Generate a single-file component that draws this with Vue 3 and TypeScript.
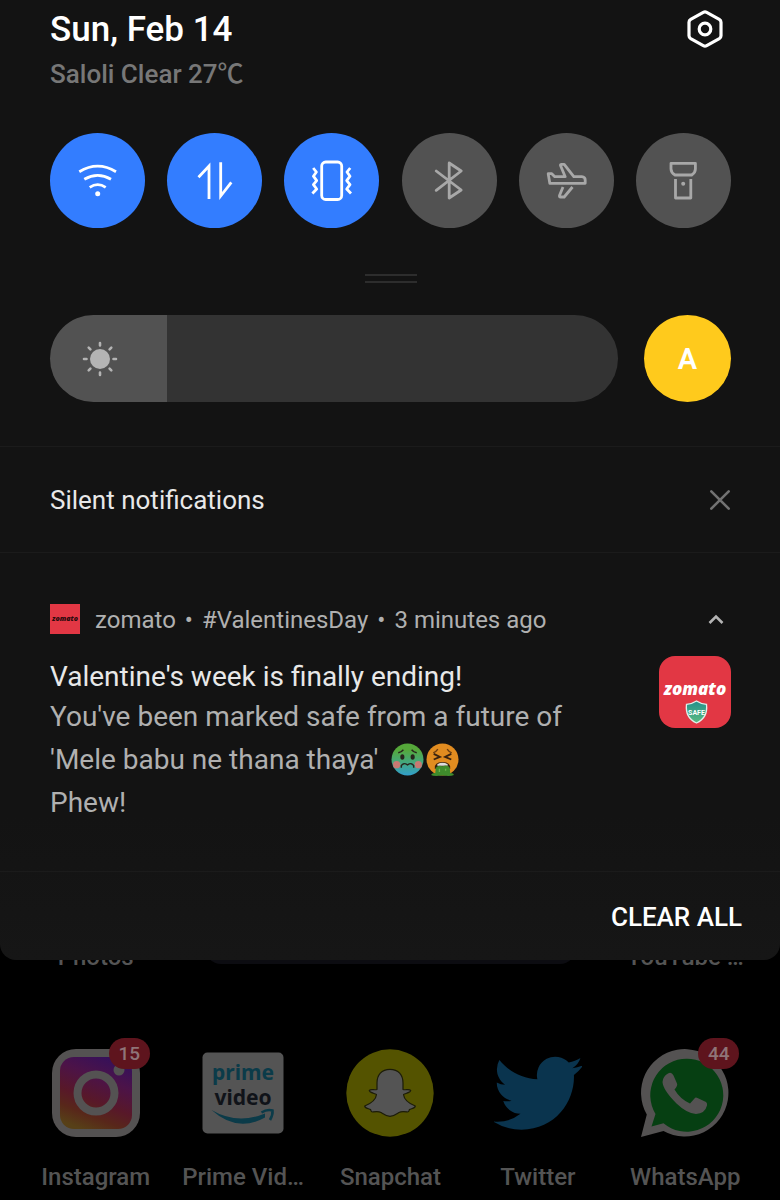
<script setup lang="ts">
import { computed, ref } from 'vue'

interface Toggle {
  id: string
  label: string
  on: boolean
}

const toggles = ref<Toggle[]>([
  { id: 'wifi', label: 'Wi-Fi', on: true },
  { id: 'data', label: 'Mobile data', on: true },
  { id: 'vibrate', label: 'Vibrate', on: true },
  { id: 'bluetooth', label: 'Bluetooth', on: false },
  { id: 'airplane', label: 'Airplane mode', on: false },
  { id: 'torch', label: 'Flashlight', on: false },
])

const brightness = ref(206)
const fill = computed(() => `${brightness.value / 10}%`)

const apps = [
  { id: 'instagram', name: 'Instagram', badge: 15 },
  { id: 'prime', name: 'Prime Vid…', badge: 0 },
  { id: 'snapchat', name: 'Snapchat', badge: 0 },
  { id: 'twitter', name: 'Twitter', badge: 0 },
  { id: 'whatsapp', name: 'WhatsApp', badge: 44 },
]
</script>

<template>
  <div class="screen">
    <main class="shade">
      <section class="controls">
        <header class="top">
          <div>
            <h1>Sun, Feb 14</h1>
            <p class="weather">Saloli Clear 27℃</p>
          </div>
          <button class="plain" type="button" aria-label="Settings">
            <svg width="40" height="40" viewBox="0 0 40 40" fill="none" stroke="#fff" stroke-width="3.2" stroke-linejoin="round">
              <path d="M18.3 3.4Q20 2.5 21.700 3.400L34.300 10.400Q36 11.400 36 13.300V26.700Q36 28.600 34.300 29.600L21.700 36.600Q20 37.500 18.300 36.600L5.700 29.600Q4 28.600 4 26.700V13.300Q4 11.400 5.700 10.400Z" />
              <circle cx="20" cy="20" r="5.8" />
            </svg>
          </button>
        </header>

        <div class="toggles">
          <button
            v-for="t in toggles"
            :key="t.id"
            type="button"
            class="toggle"
            :class="{ on: t.on }"
            :aria-label="t.label"
            :aria-pressed="t.on"
            @click="t.on = !t.on"
          >
            <svg viewBox="0 0 95 95" fill="none" stroke="currentColor" stroke-width="2.800">
              <g v-if="t.id === 'wifi'">
                <path d="M29.300 38.700Q47.700 27.500 66 38.700M34.300 46.300Q47.700 38.500 61 46.300M39.700 54.300Q47.700 49 55.700 54.300" />
                <circle cx="47.700" cy="60.700" r="2.500" fill="currentColor" stroke="none" />
              </g>
              <path v-else-if="t.id === 'data'" d="M31.500 44.200L42 33V66M53.700 29.300V63L64.300 49.300" />
              <g v-else-if="t.id === 'vibrate'">
                <rect x="37.700" y="29" width="20" height="37.500" rx="4" />
                <path stroke-linejoin="round" d="M29.200 35L32.400 39L29.400 43.200L32.700 47.700L29.400 51.700L32.700 56L28.400 60.500M66.200 35L63 39L66 43.200L62.700 47.700L66 51.700L62.700 56L67 60.500" />
              </g>
              <path v-else-if="t.id === 'bluetooth'" stroke-linejoin="round" stroke-linecap="round" d="M34.200 38L59.200 57L47.200 65V30L59.200 38L34.200 57.300" />
              <g v-else-if="t.id === 'airplane'" stroke-linejoin="round">
                <path d="M29.200 40.700H32.800L35.800 43.700H46.200L41.500 32.500Q41.200 31.300 42.500 31.300H45.200L54.800 43.700H62.800Q66.200 44 66.200 47V50.300H30.800Z" />
                <path d="M44 54L40.500 62.500Q40.200 64 41.500 64H45.200L53.500 54" />
              </g>
              <g v-else stroke-linejoin="round">
                <path d="M35 30.300H59.400V36Q59.400 39.500 55.700 42H39Q35 39.500 35 36Z" />
                <path d="M39.500 46V65H54.800V46" />
                <circle cx="47.200" cy="50.700" r="2" fill="currentColor" stroke="none" />
              </g>
            </svg>
          </button>
        </div>

        <div class="handle"></div>

        <div class="brightness">
          <label class="slider">
            <input v-model.number="brightness" type="range" min="0" max="1000" aria-label="Brightness" :style="{ '--fill': fill }" />
            <svg class="sun" width="36" height="36" viewBox="0 0 36 36" stroke="#b4b4b4" stroke-width="2.600" stroke-linecap="round">
              <circle cx="18" cy="18" r="10" fill="#b4b4b4" stroke="none" />
              <path d="M18 2V4.500M18 31.500V34M2 18H4.500M31.500 18H34M6.700 6.700L8.400 8.400M27.600 27.600L29.300 29.300M29.300 6.700L27.600 8.400M8.400 27.600L6.700 29.300" />
            </svg>
          </label>
          <button class="auto" type="button" aria-label="Automatic brightness">A</button>
        </div>
      </section>

      <section class="silent">
        <h2>Silent notifications</h2>
        <button class="plain" type="button" aria-label="Dismiss silent notifications">
          <svg width="22" height="22" viewBox="0 0 22 22" fill="none" stroke="#727272" stroke-width="2.600" stroke-linecap="round">
            <path d="M2.300 2.300L19.700 19.700M19.700 2.300L2.300 19.700" />
          </svg>
        </button>
      </section>

      <article class="note">
        <header class="meta">
          <span class="mark">zomato</span>
          <p class="source"><span>zomato</span><span>•</span><span>#ValentinesDay</span><span>•</span><span>3 minutes ago</span></p>
          <button class="plain" type="button" aria-label="Collapse">
            <svg width="16" height="12" viewBox="0 0 16 12" fill="none" stroke="#b4b4b4" stroke-width="2.600">
              <path d="M1.500 10L8 3.500L14.500 10" />
            </svg>
          </button>
        </header>
        <div class="content">
          <div class="words">
            <h3>Valentine's week is finally ending!</h3>
            <p class="message">
              You've been marked safe from a future of<br />
              'Mele babu ne thana thaya'
              <svg class="emoji" viewBox="0 0 32 32" role="img" aria-label="Nauseated face">
                <defs>
                  <linearGradient id="sick" x1="0" y1="0" x2="0" y2="1">
                    <stop offset="0.200" stop-color="#55a83a" />
                    <stop offset="0.600" stop-color="#43a880" />
                    <stop offset="1" stop-color="#319fcb" />
                  </linearGradient>
                </defs>
                <circle cx="16" cy="16" r="15.500" fill="url(#sick)" />
                <circle cx="5.500" cy="21" r="3.500" fill="#c77972" />
                <circle cx="26.500" cy="21" r="3.500" fill="#c77972" />
                <ellipse cx="11" cy="13.500" rx="2" ry="2.700" fill="#28251c" />
                <ellipse cx="21" cy="13.500" rx="2" ry="2.700" fill="#28251c" />
                <path d="M7 9.500Q10 9 12 6.500M25 9.500Q22 9 20 6.500M10 24V22Q12 18.500 16 21.200Q20 18.500 22 22V24" fill="none" stroke="#28251c" stroke-width="1.400" />
              </svg>
              <svg class="emoji" viewBox="0 0 32 32" role="img" aria-label="Vomiting face">
                <circle cx="16" cy="16" r="15.500" fill="#e18c20" />
                <path d="M7 9.500Q10 8.500 11.500 6M25 9.500Q22 8.500 20.500 6" fill="none" stroke="#6b3e12" stroke-width="1.300" />
                <path d="M7.500 10.500L13.500 13.500L7.500 16M24.500 10.500L18.500 13.500L24.500 16" fill="none" stroke="#39220f" stroke-width="1.800" />
                <path d="M8.500 25Q8 18.500 16 18.500T23.500 25Z" fill="#39220f" />
                <path d="M11 20.500Q16 18 21 20.500V22H11Z" fill="#ddd" />
                <path d="M9.500 24Q12 21 16 22.500Q21 20.500 23 24L23.500 29Q27 29 27 31Q24 32.500 16 31.500Q7 32.500 5 31Q5.500 29 9 29Z" fill="#3f8c2c" />
                <path d="M13 25V28M19 25V27" stroke="#6bb24d" stroke-width="1.300" />
              </svg><br />
              Phew!
            </p>
          </div>
          <svg class="brand" viewBox="0 0 72 72" role="img" aria-label="Zomato">
            <defs>
              <linearGradient id="shield" x1="0" y1="0" x2="0" y2="1">
                <stop offset="0" stop-color="#23908c" />
                <stop offset="1" stop-color="#5dbb82" />
              </linearGradient>
            </defs>
            <rect width="72" height="72" rx="16" fill="#e23744" />
            <text x="36" y="39" text-anchor="middle" class="brand-name">zomato</text>
            <path d="M37.500 45Q42 48 47.500 48.300C48.500 57 45.500 63.500 37.500 67C29.500 63.500 26.500 57 27.500 48.300Q33 48 37.500 45Z" fill="url(#shield)" stroke="#dff0ea" stroke-width="1.300" />
            <text x="37.500" y="59" text-anchor="middle" class="safe">SAFE</text>
          </svg>
        </div>
      </article>

      <footer class="actions">
        <button class="clear" type="button">CLEAR ALL</button>
      </footer>
    </main>

    <section class="home">
      <div class="previous">
        <span class="name">Photos</span>
        <span class="search"></span>
        <span class="name">YouTube …</span>
      </div>
      <nav class="apps">
        <a v-for="app in apps" :key="app.id" class="app" href="#">
          <span class="tile">
            <svg v-if="app.id === 'instagram'" viewBox="0 0 88 88">
              <defs>
                <linearGradient id="insta" x1="0.700" y1="0" x2="0.300" y2="1">
                  <stop offset="0" stop-color="#35105b" />
                  <stop offset="0.300" stop-color="#4c1348" />
                  <stop offset="0.600" stop-color="#581829" />
                  <stop offset="0.800" stop-color="#58271a" />
                  <stop offset="1" stop-color="#574017" />
                </linearGradient>
              </defs>
              <rect width="88" height="88" rx="24" fill="#545252" />
              <rect x="8" y="8" width="72" height="72" rx="14" fill="url(#insta)" />
              <circle cx="44" cy="44" r="18.500" fill="none" stroke="#545252" stroke-width="8" />
              <circle cx="67" cy="21" r="5.500" fill="#545252" />
            </svg>
            <svg v-else-if="app.id === 'prime'" viewBox="0 0 88 88">
              <rect x="3.500" y="3.500" width="81" height="81" rx="5" fill="#545454" />
              <text x="44" y="31" text-anchor="middle" class="prime">prime</text>
              <text x="44" y="56" text-anchor="middle" class="prime dark">video</text>
              <path d="M12.500 61Q38 76 66 64.500L66 68.500Q38 84 12.500 61Z" fill="#0b3b49" />
              <path d="M62.500 63.500Q68 60 73.500 61.500Q74 66 71 71" fill="none" stroke="#0b3b49" stroke-width="2.600" />
            </svg>
            <svg v-else-if="app.id === 'snapchat'" viewBox="0 0 88 88">
              <circle cx="44" cy="44" r="43.700" fill="#545300" />
              <path
                d="M44 20.300C35.500 20.300 31 26 31 34V40.500C28 41.500 25 39.500 23.300 41.500C23 43 27 44 30.500 45.500C30 50 25 54.500 18.700 57C18.500 59.500 23 59.500 24.500 60.500C25 62 25 63 26.500 63C30 62.500 32.500 62 35 63.500C38 65.500 40 67.300 44 67.300S50 65.500 53 63.500C55.500 62 58 62.500 61.500 63C63 63 63 62 63.500 60.500C65 59.500 69.500 59.500 69.300 57C63 54.500 58 50 57.500 45.500C61 44 65 43 64.700 41.500C63 39.500 60 41.500 57 40.500V34C57 26 52.500 20.300 44 20.300Z"
                fill="#545454"
                stroke="#1c1c08"
                stroke-width="1.200"
                stroke-linejoin="round"
              />
            </svg>
            <svg v-else-if="app.id === 'twitter'" viewBox="0.200 0.200 23.500 23.500">
              <path
                fill="#0a344e"
                d="M23.953 4.570a10 10 0 0 1-2.825.775 4.958 4.958 0 0 0 2.163-2.723c-.951.555-2.005.959-3.127 1.184a4.920 4.920 0 0 0-8.384 4.482C7.690 8.095 4.067 6.130 1.640 3.162a4.822 4.822 0 0 0-.666 2.475c0 1.710.870 3.213 2.188 4.096a4.904 4.904 0 0 1-2.228-.616v.060a4.923 4.923 0 0 0 3.946 4.827 4.996 4.996 0 0 1-2.212.085 4.936 4.936 0 0 0 4.604 3.417 9.867 9.867 0 0 1-6.102 2.105c-.390 0-.779-.023-1.170-.067a13.995 13.995 0 0 0 7.557 2.209c9.053 0 13.998-7.496 13.998-13.985 0-.210 0-.420-.015-.630A9.935 9.935 0 0 0 24 4.590z"
              />
            </svg>
            <svg v-else viewBox="0 0 88 88">
              <path d="M0 88L5.800 65.500A43.700 43.700 0 1 1 22.500 82Z" fill="#545252" />
              <path d="M10.500 77.500L14.500 65A36.500 36.500 0 1 1 22.500 74.300Z" fill="#063f12" />
              <path d="M27 24.500Q30.500 22.500 32.500 26.500L36 34.500Q37 36.500 33.500 40.500Q39 50 49 54.500L53.500 49.500Q54.500 48 56.500 49L65 53Q66.500 54 66 56.500Q64 64.500 55 65Q46 64.500 35.500 54.500Q22 41 21.500 33Q22 27 27 24.500Z" fill="#545252" />
            </svg>
            <span v-if="app.badge" class="badge">{{ app.badge }}</span>
          </span>
          <span class="name">{{ app.name }}</span>
        </a>
      </nav>
    </section>
  </div>
</template>

<style>
body {
  margin: 0;
  background: #000;
}
</style>

<style scoped>
.screen {
  min-height: 100vh;
  overflow: hidden;
  background: #000;
  color: #e8e8e8;
  font-family: Roboto, "Liberation Sans", "Noto Sans CJK SC", sans-serif;
}
h1,
h2,
h3,
p {
  margin: 0;
}
button {
  padding: 0;
  border: 0;
  background: none;
  font-family: inherit;
  cursor: pointer;
}
svg {
  display: block;
}
.plain {
  display: block;
}
.shade {
  position: relative;
  z-index: 1;
  border-radius: 0 0 16px 16px;
  background: linear-gradient(#131313 85%, #161616);
}
.controls {
  padding: 7px 49px 44px 50px;
  border-bottom: 1px solid #1b1b1b;
}
.top {
  display: flex;
  justify-content: space-between;
  align-items: flex-start;
  padding-right: 6px;
}
.top .plain {
  margin-top: 2px;
}
h1 {
  color: #fff;
  font-size: 35px;
  font-weight: 500;
  line-height: 46px;
}
.weather {
  margin-top: 1px;
  color: #777;
  font-family: Roboto, "Noto Sans CJK SC", sans-serif;
  font-size: 26px;
  font-weight: 500;
  line-height: 40px;
}
.toggles {
  display: flex;
  justify-content: space-between;
  margin-top: 39px;
}
.toggle {
  width: 95px;
  height: 95px;
  border-radius: 50%;
  background: #525252;
  color: #a8a8a8;
}
.toggle.on {
  background: #337dff;
  color: #fff;
}
.handle {
  width: 52px;
  height: 5px;
  margin: 46px auto 32px;
  border-top: 2px solid #2d2d2d;
  border-bottom: 2px solid #2d2d2d;
}
.brightness {
  display: flex;
  gap: 26px;
}
.slider {
  position: relative;
  flex: 1;
}
.slider input {
  display: block;
  width: 100%;
  height: 87px;
  margin: 0;
  border-radius: 44px;
  appearance: none;
  background: linear-gradient(to right, #525252 var(--fill), #333 var(--fill));
}
.slider input::-webkit-slider-thumb {
  appearance: none;
  width: 1px;
  height: 87px;
}
.sun {
  position: absolute;
  left: 32px;
  top: 26px;
  pointer-events: none;
}
.auto {
  width: 87px;
  height: 87px;
  border-radius: 50%;
  background: #ffca1c;
  color: #fff;
  font-size: 29px;
  font-weight: 600;
}
.silent {
  display: flex;
  justify-content: space-between;
  align-items: center;
  height: 105px;
  padding: 0 49px 0 50px;
  border-bottom: 1px solid #1b1b1b;
}
h2 {
  font-size: 26px;
  font-weight: 400;
  line-height: 40px;
}
.note {
  padding: 50px 49px 47px 50px;
  border-bottom: 1px solid #1b1b1b;
}
.meta {
  display: flex;
  align-items: center;
  height: 32px;
}
.mark {
  width: 30px;
  margin-right: 15px;
  background: #e23744;
  color: #2a0a0d;
  font: italic 800 7px/30px "Open Sans", sans-serif;
  text-align: center;
}
.source {
  display: flex;
  flex: 1;
  gap: 9px;
  padding-top: 2px;
  color: #b0b0b0;
  font-size: 24px;
  line-height: 32px;
}
.meta .plain {
  margin-right: 7px;
}
.content {
  display: flex;
  justify-content: space-between;
  margin-top: 21px;
}
h3 {
  margin-bottom: -3px;
  font-size: 28px;
  font-weight: 400;
  line-height: 42px;
}
.message {
  color: #b0b0b0;
  font-size: 28px;
  line-height: 43px;
}
.emoji {
  display: inline-block;
  width: 33px;
  height: 33px;
  margin-left: 6px;
  vertical-align: -7px;
}
.emoji + .emoji {
  margin-left: 2px;
}
.brand {
  flex: none;
  width: 72px;
  height: 72px;
}
.brand-name {
  fill: #fff;
  font: italic 800 17px "Open Sans", sans-serif;
}
.safe {
  fill: #fff;
  font: 700 7px Roboto, sans-serif;
}
.actions {
  display: flex;
  justify-content: flex-end;
  padding: 25px 38px 23px 50px;
}
.clear {
  color: #fff;
  font-size: 26px;
  font-weight: 500;
  line-height: 40px;
}
.home {
  margin-top: -17px;
  padding: 0 21px 9px 22px;
}
.name {
  color: #545454;
  font-size: 24px;
  font-weight: 500;
  line-height: 28px;
  text-align: center;
  white-space: nowrap;
}
.previous {
  display: grid;
  grid-template-columns: 1fr 3fr 1fr;
  height: 28px;
}
.search {
  height: 21px;
  margin: 0 36px;
  border-radius: 0 0 16px 16px;
  background: #0c0c11;
}
.apps {
  display: grid;
  grid-template-columns: repeat(5, 1fr);
  margin-top: 78px;
}
.app {
  display: flex;
  flex-direction: column;
  align-items: center;
  gap: 26px;
  text-decoration: none;
}
.tile {
  position: relative;
  width: 88px;
  height: 88px;
}
.badge {
  position: absolute;
  top: -11px;
  right: -10px;
  width: 41px;
  border-radius: 16px;
  background: #5e141d;
  color: #8f7478;
  font-size: 19px;
  font-weight: 500;
  line-height: 31px;
  text-align: center;
}
.prime {
  fill: #0b3b49;
  font: 700 21px "Noto Sans", sans-serif;
}
.prime.dark {
  fill: #101319;
}
</style>
